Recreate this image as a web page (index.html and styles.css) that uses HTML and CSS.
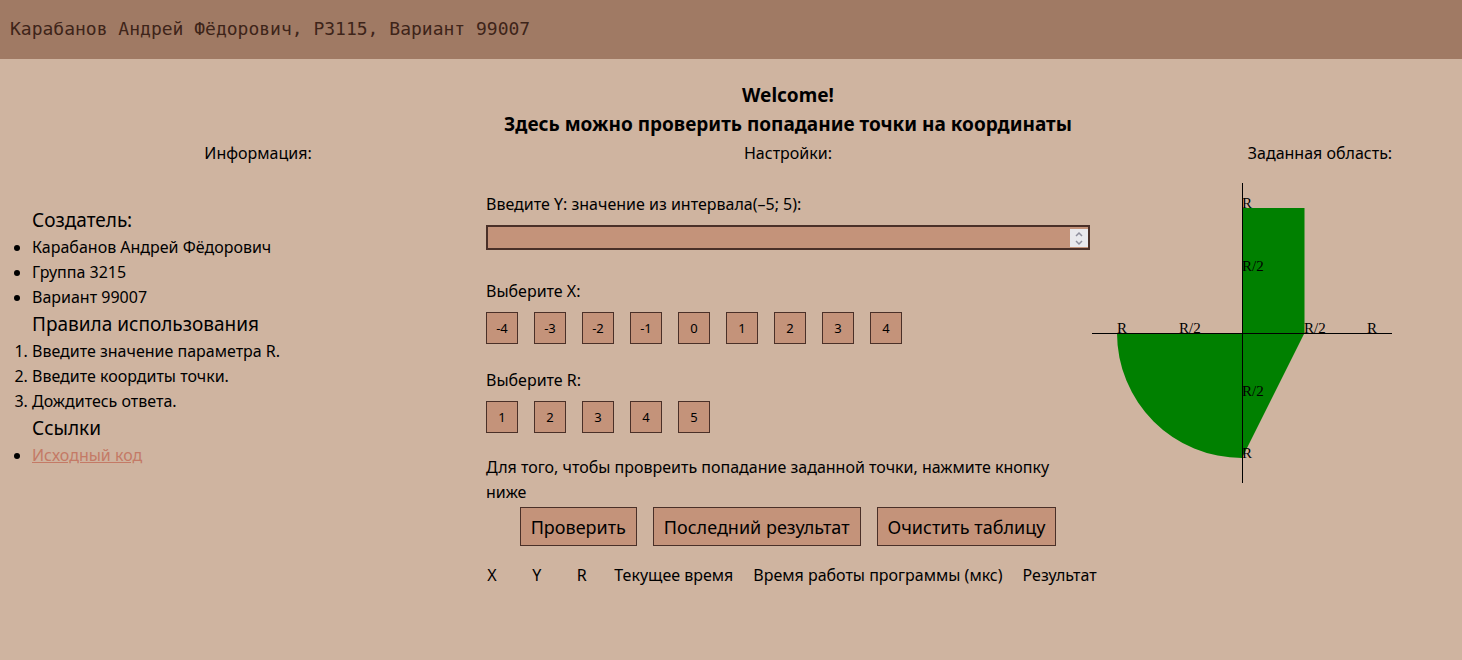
FILE: index.html
```html
<!DOCTYPE html>
<html lang="ru">
<head>
<meta charset="utf-8">
<meta name="viewport" content="width=device-width, initial-scale=1">
<title>Проверка попадания точки</title>
<link rel="stylesheet" href="styles.css">
</head>
<body>
<header class="page-header">Карабанов Андрей Фёдорович, P3115, Вариант 99007</header>
<main class="layout">
  <h1 class="title">Welcome!<br>Здесь можно проверить попадание точки на координаты</h1>

  <section class="info">
    <h2 class="section-title">Информация:</h2>
    <div class="info-body">
      <h3 class="info-title">Создатель:</h3>
      <ul class="list">
        <li>Карабанов Андрей Фёдорович</li>
        <li>Группа 3215</li>
        <li>Вариант 99007</li>
      </ul>
      <h3 class="info-title">Правила использования</h3>
      <ol class="list">
        <li>Введите значение параметра R.</li>
        <li>Введите коордиты точки.</li>
        <li>Дождитесь ответа.</li>
      </ol>
      <h3 class="info-title">Ссылки</h3>
      <ul class="list">
        <li><a class="link" href="#">Исходный код</a></li>
      </ul>
    </div>
  </section>

  <section class="settings">
    <h2 class="section-title">Настройки:</h2>
    <form class="form">
      <div class="field">
        <label class="label" for="y-value">Введите Y: значение из интервала(–5; 5):</label>
        <div class="number">
          <input class="number-input" id="y-value" type="number" min="-5" max="5">
          <svg class="spinner" viewBox="0 0 18 18" aria-hidden="true">
            <path d="M6 7 9 4 12 7M6 12 9 15 12 12"/>
          </svg>
        </div>
      </div>
      <div class="field" role="group" aria-labelledby="x-label">
        <span class="label" id="x-label">Выберите X:</span>
        <div class="choices">
          <button class="choice" type="button">-4</button>
          <button class="choice" type="button">-3</button>
          <button class="choice" type="button">-2</button>
          <button class="choice" type="button">-1</button>
          <button class="choice" type="button">0</button>
          <button class="choice" type="button">1</button>
          <button class="choice" type="button">2</button>
          <button class="choice" type="button">3</button>
          <button class="choice" type="button">4</button>
        </div>
      </div>
      <div class="field" role="group" aria-labelledby="r-label">
        <span class="label" id="r-label">Выберите R:</span>
        <div class="choices">
          <button class="choice" type="button">1</button>
          <button class="choice" type="button">2</button>
          <button class="choice" type="button">3</button>
          <button class="choice" type="button">4</button>
          <button class="choice" type="button">5</button>
        </div>
      </div>
      <div class="submit">
        <p class="hint">Для того, чтобы провреить попадание заданной точки, нажмите кнопку ниже</p>
        <div class="actions">
          <button class="action" type="button">Проверить</button>
          <button class="action" type="button">Последний результат</button>
          <button class="action" type="button">Очистить таблицу</button>
        </div>
      </div>
    </form>
    <table class="results">
      <thead>
        <tr><th>X</th><th>Y</th><th>R</th><th>Текущее время</th><th>Время работы программы (мкс)</th><th>Результат</th></tr>
      </thead>
    </table>
  </section>

  <section class="area">
    <h2 class="section-title area-title">Заданная область:</h2>
    <svg class="chart" width="300" height="300" viewBox="0 0 300 300" role="img" aria-label="Заданная область">
      <path class="shape" d="M150 25H212.5V150L150 275A125 125 0 0 1 25 150H150Z"/>
      <path class="axis" d="M0 150.5H300M150.5 0V300"/>
      <g class="mark">
        <text x="150" y="25">R</text>
        <text x="150" y="88">R/2</text>
        <text x="150" y="213">R/2</text>
        <text x="150" y="275">R</text>
        <text x="25" y="150">R</text>
        <text x="87" y="150">R/2</text>
        <text x="212" y="150">R/2</text>
        <text x="275" y="150">R</text>
      </g>
    </svg>
  </section>
</main>
</body>
</html>
```
FILE: styles.css
```css
* {
  box-sizing: border-box;
}

body {
  margin: 0;
  background: #cfb4a0;
  color: #000;
  font: 16px/25px "Noto Sans", "Open Sans", sans-serif;
}

h1, h2, h3, p {
  margin: 0;
}

.page-header {
  padding: 16px 10px 18px;
  background: #a07a64;
  color: #3e2419;
  font: 18px/25px "DejaVu Sans Mono", monospace;
}

.layout {
  display: grid;
  grid-template-columns: minmax(0, 452fr) minmax(0, 608fr) minmax(300px, 370fr);
  padding: 22px 0 22px 32px;
}

.title {
  grid-column: 2;
  font-size: 19px;
  line-height: 29px;
  text-align: center;
  white-space: nowrap;
}

.info {
  grid-column: 1;
}

.section-title {
  padding: 2px 0;
  font-size: 16px;
  font-weight: 400;
  text-align: center;
}

.info-body {
  padding-top: 38px;
}

.info-title {
  font-size: 19px;
  font-weight: 400;
  line-height: 29px;
}

.list {
  margin: 0;
  padding: 0;
}

.link {
  color: #c47a66;
}

.settings {
  display: flex;
  flex-direction: column;
  align-items: center;
}

.form {
  width: 100%;
  padding: 24px 2px 0;
}

.field {
  display: flex;
  flex-direction: column;
  gap: 8px;
  margin-bottom: 24px;
}

.number {
  position: relative;
  display: flex;
  margin-bottom: 5px;
}

.number-input {
  width: 100%;
  height: 25px;
  padding: 0 22px 0 2px;
  border: 2px solid #4a3028;
  border-radius: 0;
  background: #c4937a;
  appearance: textfield;
}

.number-input::-webkit-inner-spin-button {
  appearance: none;
}

.spinner {
  position: absolute;
  top: 4px;
  right: 2px;
  width: 18px;
  height: 18px;
  background: #e9e9ed;
  fill: none;
  stroke: #8f8f9d;
  stroke-width: 1.5;
  pointer-events: none;
}

.choices {
  display: flex;
  flex-wrap: wrap;
  gap: 16px;
}

.choice {
  width: 32px;
  height: 32px;
  padding: 0;
  border: 1px solid #4a3028;
  background: #c4937a;
  color: #000;
  font: 13px "Noto Sans", sans-serif;
}

.submit {
  display: flex;
  flex-direction: column;
  gap: 2px;
  margin-top: -2px;
}

.actions {
  display: flex;
  justify-content: center;
  gap: 16px;
}

.action {
  height: 39px;
  padding: 0 10px;
  border: 1px solid #4a3028;
  background: #c4937a;
  color: #000;
  font: 18px "Noto Sans", sans-serif;
  white-space: nowrap;
}

.results {
  margin-top: 17px;
  border-collapse: collapse;
  white-space: nowrap;
}

.results th {
  min-width: 45px;
  padding: 0 10px;
  font-weight: 400;
}

.area-title {
  width: 300px;
  text-align: right;
}

.chart {
  display: block;
  margin-top: 15px;
}

.shape {
  fill: #008000;
}

.axis {
  stroke: #000;
}

.mark {
  font: 15px "Liberation Serif", serif;
}
```
